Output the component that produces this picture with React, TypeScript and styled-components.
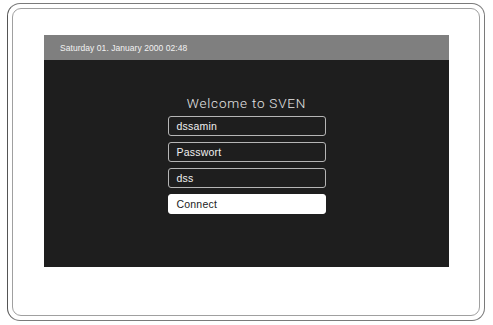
import React from "react";
import styled, { createGlobalStyle } from "styled-components";

const GlobalStyle = createGlobalStyle`
  html, body {
    margin: 0;
    padding: 0;
    background: #fff;
  }
  body {
    font-family: "Liberation Sans", Arial, sans-serif;
  }
`;

const Page = styled.div`
  width: 493px;
  height: 325px;
  box-sizing: border-box;
  padding: 3px 8px 4px 7px;
`;

const OuterFrame = styled.div`
  height: 100%;
  box-sizing: border-box;
  border: 1px solid #7a7a7a;
  border-left-color: #555;
  border-radius: 13px;
  padding: 4px;
`;

const InnerFrame = styled.div`
  height: 100%;
  box-sizing: border-box;
  border: 1px solid #a0a0a0;
  border-radius: 9px;
  padding: 26px 30px 48px 31px;
`;

const Screen = styled.div`
  height: 100%;
  display: flex;
  flex-direction: column;
  background: #1e1e1e;
`;

const StatusBar = styled.div`
  height: 25px;
  flex-shrink: 0;
  display: flex;
  align-items: center;
  padding-left: 16px;
  background: #7f7f7f;
  color: #f2f2f2;
  font-size: 8.5px;
  letter-spacing: 0.05px;
`;

const LoginArea = styled.div`
  flex: 1;
  display: flex;
  flex-direction: column;
  align-items: center;
  padding-top: 35px;
`;

const Title = styled.h1`
  margin: 0 0 5px;
  font-family: Roboto, "Liberation Sans", sans-serif;
  font-weight: 300;
  font-size: 13.5px;
  letter-spacing: 0.8px;
  line-height: 16px;
  color: #e6e6e6;
`;

const Form = styled.div`
  display: flex;
  flex-direction: column;
  gap: 6px;
  width: 158px;
`;

const Field = styled.div<{ $primary?: boolean }>`
  height: 20px;
  box-sizing: border-box;
  display: flex;
  align-items: center;
  padding-left: 8px;
  border: 1px solid ${(p) => (p.$primary ? "#fff" : "#b5b5b5")};
  border-radius: 3px;
  background: ${(p) => (p.$primary ? "#fff" : "transparent")};
  color: ${(p) => (p.$primary ? "#222" : "#f0f0f0")};
  font-size: 10.5px;
  letter-spacing: 0.2px;
`;

export default function App() {
  return (
    <>
      <GlobalStyle />
      <Page>
        <OuterFrame>
          <InnerFrame>
            <Screen>
              <StatusBar>Saturday 01. January 2000 02:48</StatusBar>
              <LoginArea>
                <Title>Welcome to SVEN</Title>
                <Form>
                  <Field>dssamin</Field>
                  <Field>Passwort</Field>
                  <Field>dss</Field>
                  <Field $primary>Connect</Field>
                </Form>
              </LoginArea>
            </Screen>
          </InnerFrame>
        </OuterFrame>
      </Page>
    </>
  );
}
